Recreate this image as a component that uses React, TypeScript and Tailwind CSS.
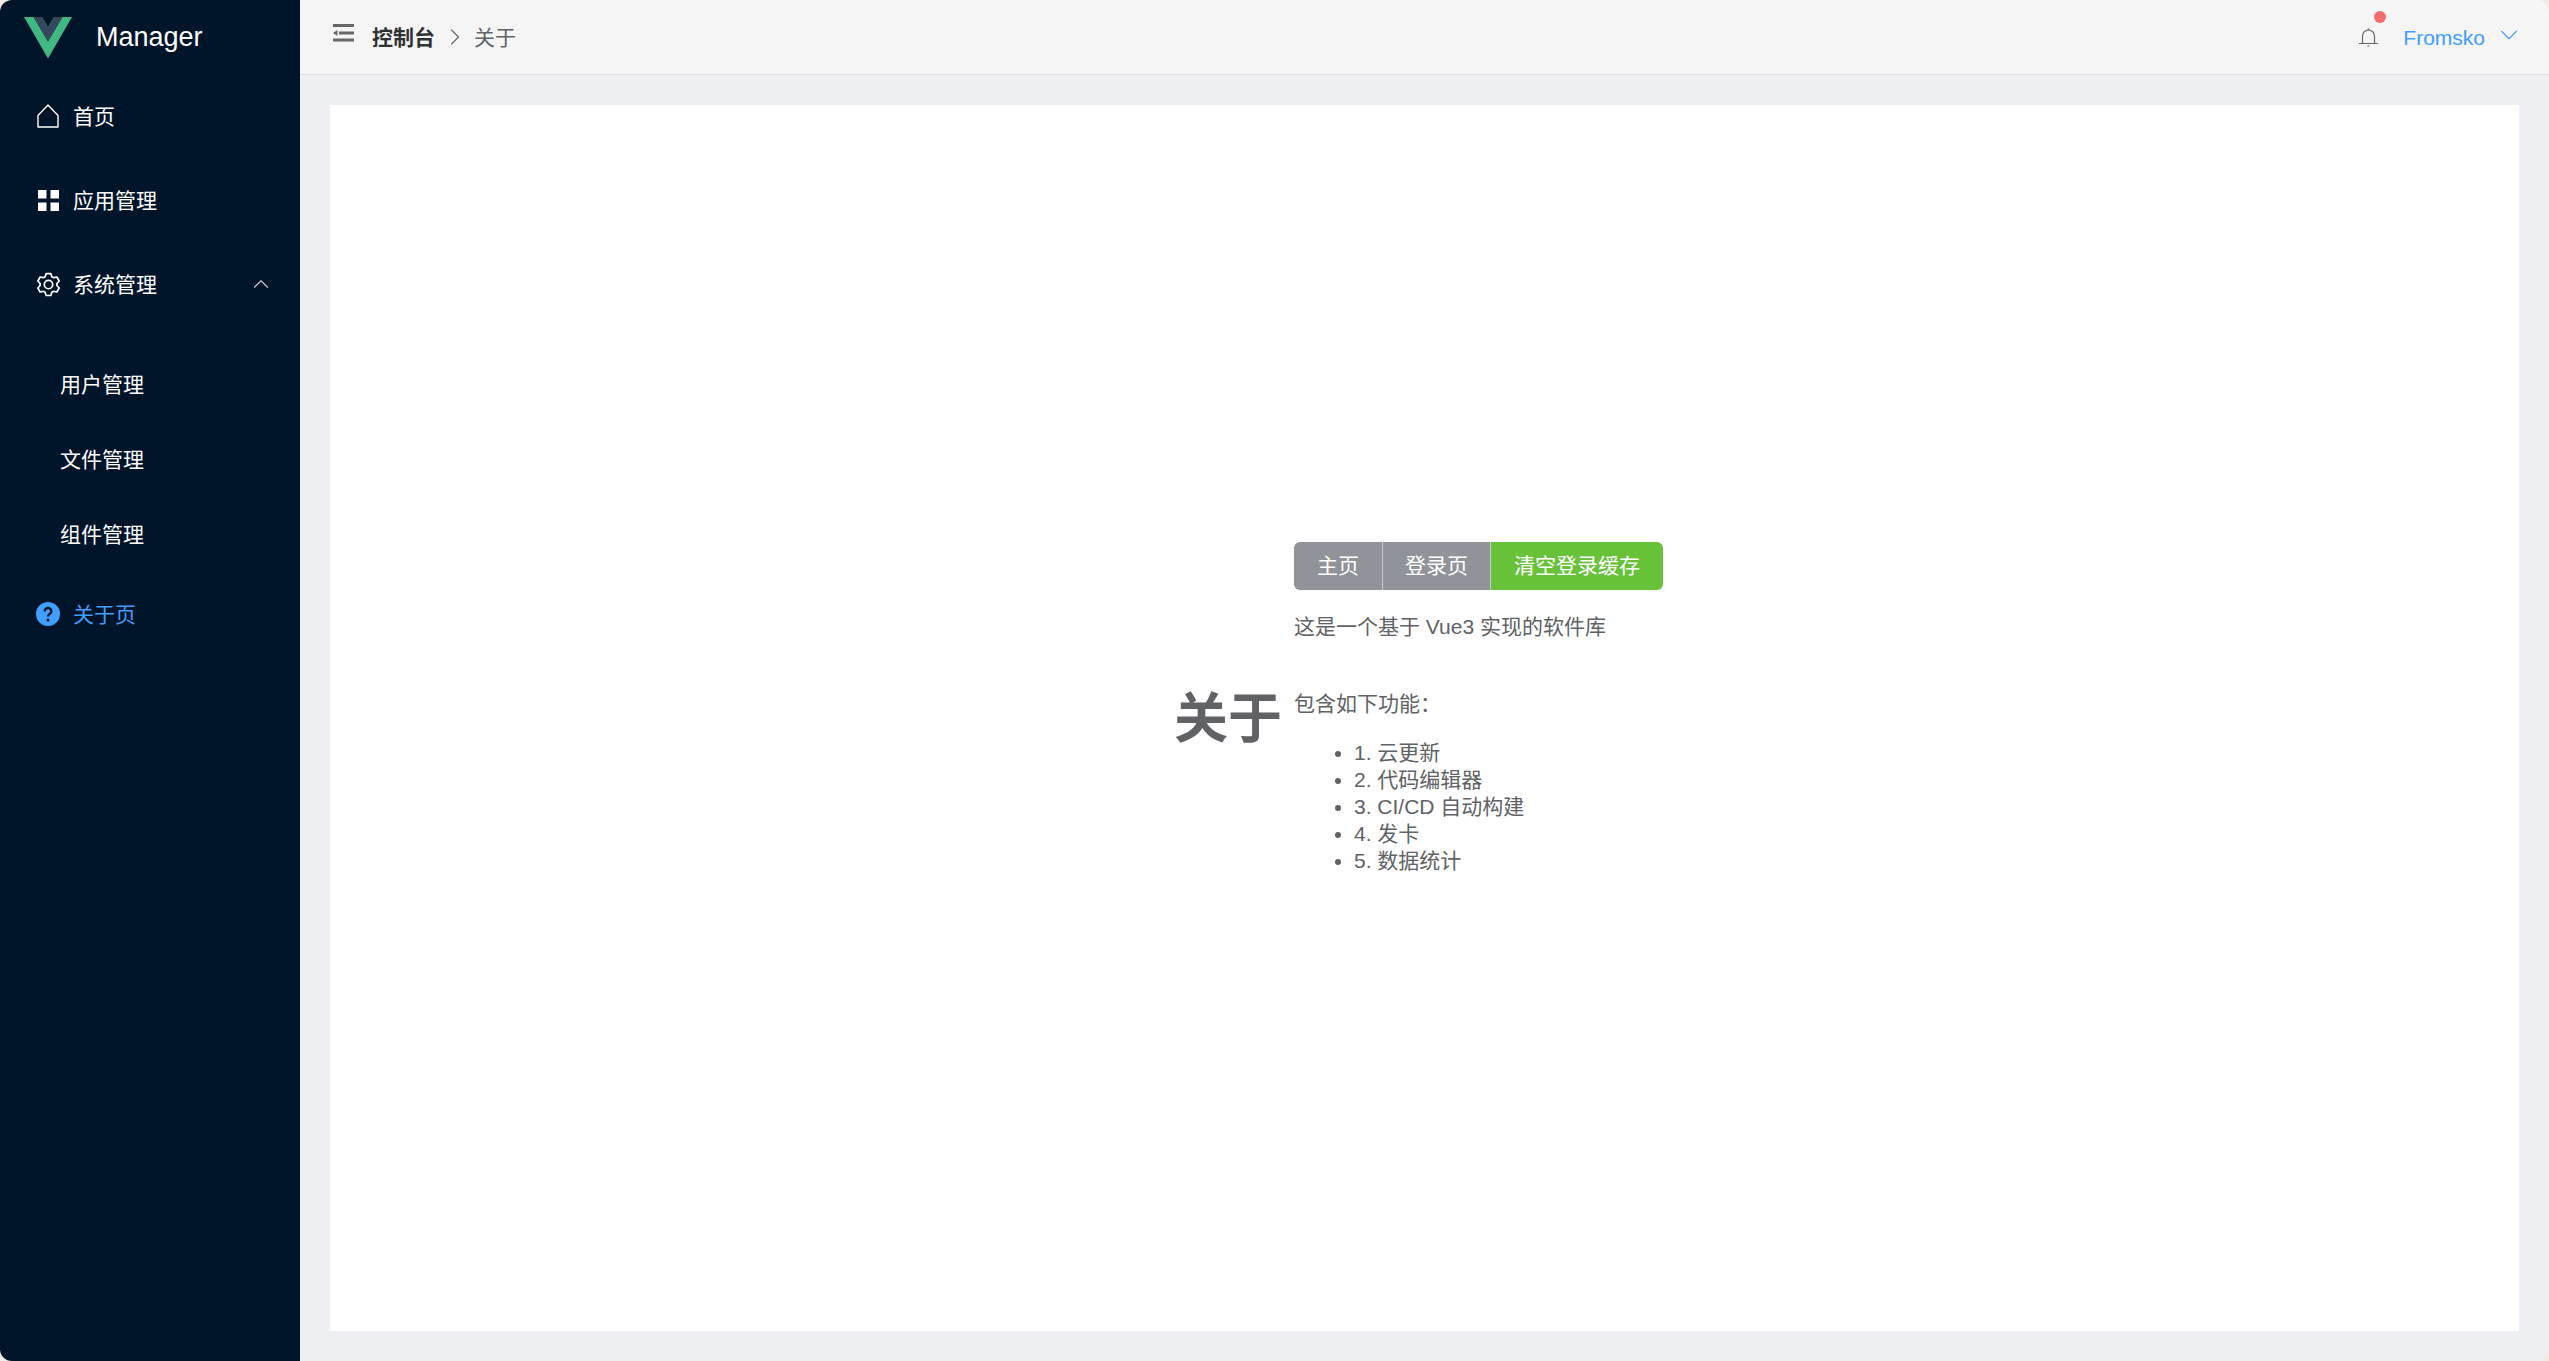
import { ChevronDown, ChevronRight, ChevronUp } from "lucide-react";

const CN = "font-['Liberation_Sans','Noto_Sans_CJK_SC',sans-serif]";

const VueLogo = () => (
  <svg viewBox="0 0 48 42" className="w-[48px] h-[42px] mt-[1px]">
    <path d="M0 0 H9.6 L24 24.5 L38.4 0 H48 L24 41.5 Z" fill="#41b883" />
    <path d="M9.6 0 H18.6 L24 9.4 L29.4 0 H38.4 L24 24.5 Z" fill="#35495e" />
  </svg>
);

const HomeIcon = () => (
  <svg viewBox="0 0 22 24" className="w-[22px] h-[24px]" fill="none" stroke="#fff" strokeWidth="1.4">
    <path d="M1 11.5 L11 1 L21 11.5 V23 H1 Z" strokeLinejoin="round" />
  </svg>
);

const GridIcon = () => (
  <svg viewBox="0 0 21 21" className="w-[21px] h-[21px]" fill="#fff">
    <rect x="0" y="0" width="8.5" height="8.5" />
    <rect x="12.5" y="0" width="8.5" height="8.5" />
    <rect x="0" y="12.5" width="8.5" height="8.5" />
    <rect x="12.5" y="12.5" width="8.5" height="8.5" />
  </svg>
);

const GearIcon = () => (
  <svg viewBox="0 0 1024 1024" className="w-[27px] h-[27px] shrink-0" fill="#fff">
    <path d="M600.704 64a32 32 0 0 1 30.464 22.208l35.2 109.376c14.784 7.232 28.928 15.36 42.432 24.512l112.384-24.192a32 32 0 0 1 34.432 15.36L944.32 364.8a32 32 0 0 1-4.032 37.504l-77.12 85.12a357.12 357.12 0 0 1 0 49.024l77.12 85.248a32 32 0 0 1 4.032 37.504l-88.704 153.6a32 32 0 0 1-34.432 15.296L708.8 803.904c-13.44 9.088-27.648 17.28-42.368 24.512l-35.264 109.376A32 32 0 0 1 600.704 960H423.296a32 32 0 0 1-30.464-22.208L357.696 828.48a351.616 351.616 0 0 1-42.56-24.64l-112.32 24.256a32 32 0 0 1-34.432-15.36L79.68 659.2a32 32 0 0 1 4.032-37.504l77.12-85.248a357.12 357.12 0 0 1 0-48.896l-77.12-85.248A32 32 0 0 1 79.68 364.8l88.704-153.6a32 32 0 0 1 34.432-15.296l112.32 24.256c13.568-9.152 27.776-17.408 42.56-24.64l35.2-109.312A32 32 0 0 1 423.232 64H600.64zm-23.424 64H446.72l-36.352 113.088-24.512 11.968a294.113 294.113 0 0 0-34.816 20.096l-22.656 15.36-116.224-25.088-65.28 113.152 79.68 88.192-1.92 27.136a293.12 293.12 0 0 0 0 40.192l1.92 27.136-79.808 88.192 65.344 113.152 116.224-25.024 22.656 15.296a294.113 294.113 0 0 0 34.816 20.096l24.512 11.968L446.72 896h130.688l36.48-113.152 24.448-11.904a288.282 288.282 0 0 0 34.752-20.096l22.592-15.296 116.288 25.024 65.28-113.152-79.744-88.192 1.92-27.136a293.12 293.12 0 0 0 0-40.256l-1.92-27.136 79.808-88.128-65.344-113.152-116.288 24.96-22.592-15.232a287.616 287.616 0 0 0-34.752-20.096l-24.448-11.904L577.344 128zM512 320a192 192 0 1 1 0 384 192 192 0 0 1 0-384zm0 64a128 128 0 1 0 0 256 128 128 0 0 0 0-256z" />
  </svg>
);

const QuestionIcon = () => (
  <svg viewBox="0 0 24 24" className="w-[24px] h-[24px]">
    <circle cx="12" cy="12" r="12" fill="#409eff" />
    <path
      d="M8.6 9.4a3.4 3.4 0 0 1 6.8 0c0 2.4-3.4 2.6-3.4 5"
      fill="none"
      stroke="#001429"
      strokeWidth="2.4"
    />
    <circle cx="12" cy="18" r="1.5" fill="#001429" />
  </svg>
);

const CollapseIcon = () => (
  <svg viewBox="0 0 21 18" className="w-[21px] h-[18px] mb-[9px]" fill="#666">
    <rect x="0" y="0" width="21" height="3" />
    <rect x="6" y="7.5" width="15" height="3" />
    <rect x="0" y="14.5" width="21" height="3" />
    <path d="M0 9 L4.5 6 V12 Z" />
  </svg>
);

const BellIcon = () => (
  <svg viewBox="0 0 19 19" className="w-[19px] h-[19px]" fill="none" stroke="#666" strokeWidth="1.2">
    <path d="M3.5 15.5 V8 a6 6 0 0 1 12 0 V15.5" />
    <path d="M0 15.5 H19" />
    <path d="M9.5 0.5 V2" strokeWidth="1.6" />
    <path d="M8.5 18 H10.5" strokeWidth="1.2" />
  </svg>
);

const MenuItem = ({ icon, label, right, active }: any) => (
  <div
    className={`h-[84px] pl-[36px] pr-[26px] flex items-center text-[21px] ${
      active ? "text-[#409eff]" : "text-white"
    }`}
  >
    <span className="w-[24px] flex justify-center mr-[13px]">{icon}</span>
    <span className="flex-1 pt-[2px]">{label}</span>
    {right}
  </div>
);

const SubItem = ({ label }: { label: string }) => (
  <div className="h-[75px] pl-[60px] pt-[1px] flex items-center text-[21px] text-white">{label}</div>
);

export default function App() {
  return (
    <div className={`w-full h-[1361px] bg-[#f5e9e4] overflow-hidden ${CN}`}>
      <div className="w-full h-full flex rounded-[12px] overflow-hidden bg-[#eff0f4]">
        <aside className="w-[300px] shrink-0 bg-[#00142a]">
          <div className="h-[74px] pl-[24px] flex items-center">
            <VueLogo />
            <span className="ml-[24px] text-[27px] text-white">Manager</span>
          </div>
          <MenuItem icon={<HomeIcon />} label="首页" />
          <MenuItem icon={<GridIcon />} label="应用管理" />
          <MenuItem
            icon={<GearIcon />}
            label="系统管理"
            right={<ChevronUp size={26} strokeWidth={1} color="#c8ccd4" />}
          />
          <div className="pt-[21px]">
            <SubItem label="用户管理" />
            <SubItem label="文件管理" />
            <SubItem label="组件管理" />
          </div>
          <MenuItem icon={<QuestionIcon />} label="关于页" active />
        </aside>
        <main className="flex-1 flex flex-col min-w-0">
          <header className="h-[75px] shrink-0 bg-[#f5f5f6] border-b border-[#dfdfe3] flex items-center pl-[33px] pr-[25px]">
            <CollapseIcon />
            <span className="ml-[18px] pt-[1px] text-[21px] font-bold text-[#303133]">控制台</span>
            <ChevronRight size={28} strokeWidth={1} color="#666" className="ml-[6px] mr-[5px]" />
            <span className="pt-[1px] text-[21px] text-[#606266]">关于</span>
            <div className="ml-auto flex items-center">
              <span className="relative">
                <BellIcon />
                <span className="absolute -top-[17px] left-[15px] w-[12px] h-[12px] rounded-full bg-[#f56c6c]" />
              </span>
              <span className="ml-[25px] pt-[1px] text-[21px] text-[#409eff]">Fromsko</span>
              <ChevronDown size={30} strokeWidth={0.9} color="#409eff" className="ml-[9px] mb-[4px]" />
            </div>
          </header>
          <div className="flex-1 min-h-0 p-[30px]">
            <div className="w-full h-full bg-white flex items-center justify-center text-[#606266] text-[21px]">
              <div className="flex items-center pr-[12px] pb-[21px]">
                <h1 className="text-[54px] font-bold text-[#606266] mr-[12px] leading-none mt-[23px]">关于</h1>
                <div>
                  <div className="flex w-fit h-[48px] rounded-[6px] overflow-hidden text-white">
                    <span className="px-[23px] flex items-center bg-[#909399] border-r border-[#c8c9cc]">主页</span>
                    <span className="px-[22px] flex items-center bg-[#909399] border-r border-[#c8c9cc]">登录页</span>
                    <span className="px-[23px] flex items-center bg-[#67c23a]">清空登录缓存</span>
                  </div>
                  <p className="mt-[21px]">这是一个基于 Vue3 实现的软件库</p>
                  <p className="mt-[46px]">包含如下功能：</p>
                  <ul className="mt-[19px] pl-[60px] list-disc leading-[27px]">
                    <li>1. 云更新</li>
                    <li>2. 代码编辑器</li>
                    <li>3. CI/CD 自动构建</li>
                    <li>4. 发卡</li>
                    <li>5. 数据统计</li>
                  </ul>
                </div>
              </div>
            </div>
          </div>
        </main>
      </div>
    </div>
  );
}
